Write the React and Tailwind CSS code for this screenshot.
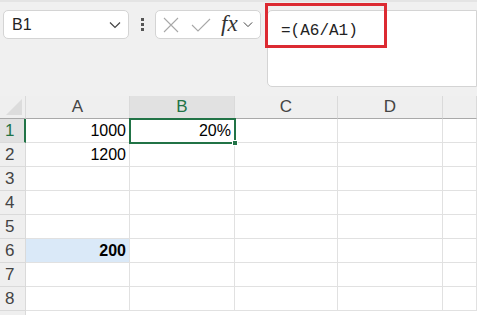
const COLS = ['A', 'B', 'C', 'D', '']
const ROWS = [1, 2, 3, 4, 5, 6, 7, 8]

const CELLS = {
  'A1': { text: '1000' },
  'A2': { text: '1200' },
  'B1': { text: '20%' },
  'A6': { text: '200', bold: true, fill: true },
}

function Chevron({ className }) {
  return (
    <svg className={className} viewBox="0 0 12 8" fill="none" stroke="#444" strokeWidth="1.2">
      <path d="M1 1.5 L6 6.5 L11 1.5" />
    </svg>
  )
}

export default function App() {
  return (
    <div className="w-[477px] h-[315px] overflow-hidden bg-[#f0f0f0] font-['Liberation_Sans',sans-serif] text-[#222]">
      {/* formula bar row */}
      <div className="relative h-[96px] border-t-2 border-[#e4e4e4]">
        <div className="flex items-start gap-0 pt-[8px] pl-[3px]">
          <div className="w-[126px] h-[29px] flex items-center justify-between pl-[8px] pr-[7px] bg-white border border-[#d4d4d4] rounded-[5px]">
            <span className="text-[16px] text-[#222]">B1</span>
            <Chevron className="w-[12px] h-[8px]" />
          </div>
          <div className="w-[26px] h-[29px] flex flex-col items-center justify-center gap-[2px]">
            <span className="w-[3px] h-[3px] bg-[#555]" />
            <span className="w-[3px] h-[3px] bg-[#555]" />
            <span className="w-[3px] h-[3px] bg-[#555]" />
          </div>
          <div className="w-[106px] h-[29px] flex items-center bg-white border border-[#d4d4d4] rounded-[5px] pl-[7px]">
            <svg className="w-[16px] h-[16px]" viewBox="0 0 16 16" stroke="#a8a8a8" strokeWidth="1.1">
              <path d="M1 1 L15 15 M15 1 L1 15" />
            </svg>
            <svg className="w-[20px] h-[16px] ml-[12px]" viewBox="0 0 20 16" fill="none" stroke="#a8a8a8" strokeWidth="1.1">
              <path d="M1 8 L7 14 L19 2" />
            </svg>
            <span className="ml-[10px] text-[23px] leading-none italic font-['Liberation_Serif',serif] text-[#333] -mt-[3px]">fx</span>
            <Chevron className="w-[10px] h-[7px] ml-[5px]" />
          </div>
          <div className="ml-[6px] flex-1 h-[77px] bg-white border border-[#d4d4d4] rounded-l-[5px] pl-[13px] pt-[7px]">
            <span className="font-['Liberation_Mono',monospace] text-[16px] text-[#222]">=(A6/A1)</span>
          </div>
        </div>
        <div className="absolute left-[265px] top-[1px] w-[122px] h-[45px] border-[3px] border-[#dc2a32]" />
      </div>

      {/* grid */}
      <div className="relative grid grid-cols-[26px_104px_105px_103px_105px_1fr] auto-rows-[24px] grid-rows-[23px] bg-white h-[219px]">
        <div className="bg-[#efefef] border-r border-b border-[#a9a9a9] border-r-[#dadada] flex items-end justify-end p-[3px]">
          <svg className="w-[16px] h-[16px]" viewBox="0 0 16 16"><path d="M16 0 L16 16 L0 16 Z" fill="#dcdcdc" /></svg>
        </div>
        {COLS.map(c => (
          <div
            key={c || 'E'}
            className={
              c === 'B'
                ? 'bg-[#e1e1e1] border-r border-b border-[#a9a9a9] border-r-[#dadada] flex items-center justify-center text-[17px] text-[#217346]'
                : 'bg-[#efefef] border-r border-b border-[#a9a9a9] border-r-[#dadada] flex items-center justify-center text-[17px] text-[#444]'
            }
          >
            {c}
          </div>
        ))}
        {ROWS.map(r => (
          <>
            <div
              key={'h' + r}
              className={
                r === 1
                  ? 'bg-[#e1e1e1] border-r-2 border-r-[#217346] border-b border-b-[#dadada] flex items-center pl-[5px] text-[17px] text-[#217346]'
                  : 'bg-[#efefef] border-r border-r-[#dadada] border-b border-b-[#dadada] flex items-center pl-[5px] text-[17px] text-[#444]'
              }
            >
              {r}
            </div>
            {COLS.map(c => {
              const cell = CELLS[c + r]
              return (
                <div
                  key={c + r}
                  className={
                    (cell && cell.fill ? 'bg-[#dae9f8] ' : '') +
                    'border-r border-b border-[#e1e1e1] flex items-center justify-end pr-[3px] text-[16px] text-black'
                  }
                >
                  {cell && <span className={cell.bold ? 'font-bold' : ''}>{cell.text}</span>}
                </div>
              )
            })}
          </>
        ))}
        <div className="bg-[#efefef] border-r border-r-[#dadada]" />
        {/* active cell B1 */}
        <div className="absolute left-[129px] top-[22px] w-[107px] h-[26px] border-2 border-[#217346]" />
        <div className="absolute left-[232px] top-[44px] w-[6px] h-[6px] bg-[#217346] border border-white" />
      </div>
    </div>
  )
}
